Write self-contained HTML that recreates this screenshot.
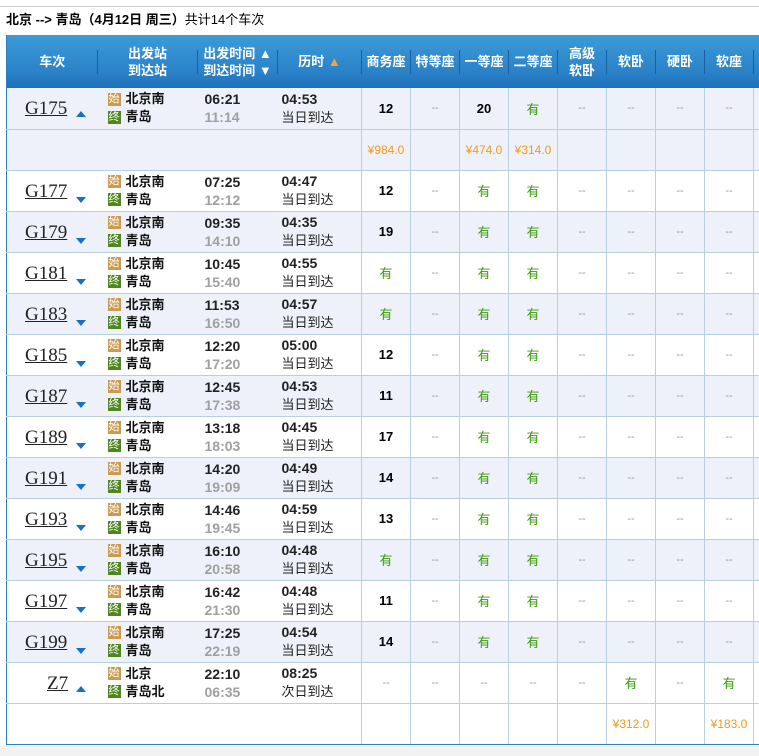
<!DOCTYPE html>
<html><head><meta charset="utf-8"><style>
*{margin:0;padding:0;box-sizing:border-box}
body{width:759px;height:756px;background:#fff;font-family:"Liberation Sans","Noto Sans CJK SC",sans-serif;position:relative;overflow:hidden}
.topline{position:absolute;left:0;top:6px;width:759px;height:1px;background:#d0d0d0}
.title{position:absolute;left:6px;top:9px;font-size:13px;color:#000;white-space:nowrap}
.title b{font-weight:bold}
.bot{position:absolute;left:0;top:746px;width:759px;height:10px;background:#f2f2f2}
table{position:absolute;left:6px;top:35px;border-collapse:collapse;table-layout:fixed;width:800px;border-left:1px solid #2b7fc4}
th{height:53px;color:#fff;font-size:13px;font-weight:bold;background:linear-gradient(#3d9bd9,#2a82c8 70%,#1f70b8);line-height:17px;position:relative;padding:0}
th:after{content:"";position:absolute;right:0;top:15px;height:24px;width:1px;background:#1a5f9e;box-shadow:1px 0 0 #5aaee3}
th:last-child:after{display:none}
td{height:41px;border-bottom:1px solid #b8d0de;padding:0;font-size:13px;text-align:center;vertical-align:middle}
td.s{border-left:1px solid #b8d0de}
tr.b td{background:#eef1f9}
tr.last td{border-bottom:1px solid #2b7fc4}
.tn{position:relative;height:40px}
.tn a{position:absolute;left:18px;top:10px;font-family:"Liberation Serif",serif;font-size:19px;color:#222;text-decoration:underline}
.tn i{position:absolute;left:69px;top:23px;width:0;height:0;border-left:5px solid transparent;border-right:5px solid transparent}
.up{border-bottom:6px solid #1a6fc2}
.dn{border-top:6px solid #1a6fc2;top:26px!important}
.st{text-align:left;font-weight:bold;font-size:13px;color:#111;padding-left:10px}
.st div{height:18px;line-height:18px;display:flex;align-items:center}
.bd{display:inline-block;width:13px;height:13px;color:#fff;font-size:11px;line-height:13px;text-align:center;margin-right:5px;font-weight:normal;flex:none}
.s1{background:#c99a4f}.s2{background:#4f8620}
.tm{text-align:left;line-height:18px;font-weight:bold;font-size:14px;color:#222;padding-left:7px}
.tm span{color:#a0a0a0}
.du{text-align:left;line-height:18px;font-size:13px;color:#222;padding-left:4px}
.du b{font-size:14px}
.n{font-weight:bold}
.y{color:#3a9a0a}
.d{color:#999;font-size:11px}
.p{color:#f09a1d;font-size:12px}
</style></head><body>
<div class="topline"></div>
<div class="title"><b>北京 --&gt; 青岛（4月12日&nbsp;周三）</b>共计14个车次</div>
<div class="bot"></div>
<table>
<colgroup><col style="width:91px"><col style="width:100px"><col style="width:80px"><col style="width:84px"><col style="width:49px"><col style="width:49px"><col style="width:49px"><col style="width:49px"><col style="width:49px"><col style="width:49px"><col style="width:49px"><col style="width:49px"><col style="width:53px"></colgroup>
<tr><th>车次</th><th>出发站<br>到达站</th><th>出发时间 ▲<br>到达时间 ▼</th><th>历时 <span style="color:#f6a23a">▲</span></th><th>商务座</th><th>特等座</th><th>一等座</th><th>二等座</th><th>高级<br>软卧</th><th>软卧</th><th>硬卧</th><th>软座</th><th>硬座</th></tr>
<tr class="b"><td><div class="tn"><a>G175</a><i class="up"></i></div></td><td class="st"><div><span class="bd s1">始</span>北京南</div><div><span class="bd s2">终</span>青岛</div></td><td class="tm">06:21<br><span>11:14</span></td><td class="du"><b>04:53</b><br>当日到达</td><td class="s n">12</td><td class="s d">--</td><td class="s n">20</td><td class="s y">有</td><td class="s d">--</td><td class="s d">--</td><td class="s d">--</td><td class="s d">--</td><td class="s d">--</td></tr>
<tr class="b"><td></td><td></td><td></td><td></td><td class="s p">¥984.0</td><td class="s"></td><td class="s p">¥474.0</td><td class="s p">¥314.0</td><td class="s"></td><td class="s"></td><td class="s"></td><td class="s"></td><td class="s"></td></tr>
<tr><td><div class="tn"><a>G177</a><i class="dn"></i></div></td><td class="st"><div><span class="bd s1">始</span>北京南</div><div><span class="bd s2">终</span>青岛</div></td><td class="tm">07:25<br><span>12:12</span></td><td class="du"><b>04:47</b><br>当日到达</td><td class="s n">12</td><td class="s d">--</td><td class="s y">有</td><td class="s y">有</td><td class="s d">--</td><td class="s d">--</td><td class="s d">--</td><td class="s d">--</td><td class="s d">--</td></tr>
<tr class="b"><td><div class="tn"><a>G179</a><i class="dn"></i></div></td><td class="st"><div><span class="bd s1">始</span>北京南</div><div><span class="bd s2">终</span>青岛</div></td><td class="tm">09:35<br><span>14:10</span></td><td class="du"><b>04:35</b><br>当日到达</td><td class="s n">19</td><td class="s d">--</td><td class="s y">有</td><td class="s y">有</td><td class="s d">--</td><td class="s d">--</td><td class="s d">--</td><td class="s d">--</td><td class="s d">--</td></tr>
<tr><td><div class="tn"><a>G181</a><i class="dn"></i></div></td><td class="st"><div><span class="bd s1">始</span>北京南</div><div><span class="bd s2">终</span>青岛</div></td><td class="tm">10:45<br><span>15:40</span></td><td class="du"><b>04:55</b><br>当日到达</td><td class="s y">有</td><td class="s d">--</td><td class="s y">有</td><td class="s y">有</td><td class="s d">--</td><td class="s d">--</td><td class="s d">--</td><td class="s d">--</td><td class="s d">--</td></tr>
<tr class="b"><td><div class="tn"><a>G183</a><i class="dn"></i></div></td><td class="st"><div><span class="bd s1">始</span>北京南</div><div><span class="bd s2">终</span>青岛</div></td><td class="tm">11:53<br><span>16:50</span></td><td class="du"><b>04:57</b><br>当日到达</td><td class="s y">有</td><td class="s d">--</td><td class="s y">有</td><td class="s y">有</td><td class="s d">--</td><td class="s d">--</td><td class="s d">--</td><td class="s d">--</td><td class="s d">--</td></tr>
<tr><td><div class="tn"><a>G185</a><i class="dn"></i></div></td><td class="st"><div><span class="bd s1">始</span>北京南</div><div><span class="bd s2">终</span>青岛</div></td><td class="tm">12:20<br><span>17:20</span></td><td class="du"><b>05:00</b><br>当日到达</td><td class="s n">12</td><td class="s d">--</td><td class="s y">有</td><td class="s y">有</td><td class="s d">--</td><td class="s d">--</td><td class="s d">--</td><td class="s d">--</td><td class="s d">--</td></tr>
<tr class="b"><td><div class="tn"><a>G187</a><i class="dn"></i></div></td><td class="st"><div><span class="bd s1">始</span>北京南</div><div><span class="bd s2">终</span>青岛</div></td><td class="tm">12:45<br><span>17:38</span></td><td class="du"><b>04:53</b><br>当日到达</td><td class="s n">11</td><td class="s d">--</td><td class="s y">有</td><td class="s y">有</td><td class="s d">--</td><td class="s d">--</td><td class="s d">--</td><td class="s d">--</td><td class="s d">--</td></tr>
<tr><td><div class="tn"><a>G189</a><i class="dn"></i></div></td><td class="st"><div><span class="bd s1">始</span>北京南</div><div><span class="bd s2">终</span>青岛</div></td><td class="tm">13:18<br><span>18:03</span></td><td class="du"><b>04:45</b><br>当日到达</td><td class="s n">17</td><td class="s d">--</td><td class="s y">有</td><td class="s y">有</td><td class="s d">--</td><td class="s d">--</td><td class="s d">--</td><td class="s d">--</td><td class="s d">--</td></tr>
<tr class="b"><td><div class="tn"><a>G191</a><i class="dn"></i></div></td><td class="st"><div><span class="bd s1">始</span>北京南</div><div><span class="bd s2">终</span>青岛</div></td><td class="tm">14:20<br><span>19:09</span></td><td class="du"><b>04:49</b><br>当日到达</td><td class="s n">14</td><td class="s d">--</td><td class="s y">有</td><td class="s y">有</td><td class="s d">--</td><td class="s d">--</td><td class="s d">--</td><td class="s d">--</td><td class="s d">--</td></tr>
<tr><td><div class="tn"><a>G193</a><i class="dn"></i></div></td><td class="st"><div><span class="bd s1">始</span>北京南</div><div><span class="bd s2">终</span>青岛</div></td><td class="tm">14:46<br><span>19:45</span></td><td class="du"><b>04:59</b><br>当日到达</td><td class="s n">13</td><td class="s d">--</td><td class="s y">有</td><td class="s y">有</td><td class="s d">--</td><td class="s d">--</td><td class="s d">--</td><td class="s d">--</td><td class="s d">--</td></tr>
<tr class="b"><td><div class="tn"><a>G195</a><i class="dn"></i></div></td><td class="st"><div><span class="bd s1">始</span>北京南</div><div><span class="bd s2">终</span>青岛</div></td><td class="tm">16:10<br><span>20:58</span></td><td class="du"><b>04:48</b><br>当日到达</td><td class="s y">有</td><td class="s d">--</td><td class="s y">有</td><td class="s y">有</td><td class="s d">--</td><td class="s d">--</td><td class="s d">--</td><td class="s d">--</td><td class="s d">--</td></tr>
<tr><td><div class="tn"><a>G197</a><i class="dn"></i></div></td><td class="st"><div><span class="bd s1">始</span>北京南</div><div><span class="bd s2">终</span>青岛</div></td><td class="tm">16:42<br><span>21:30</span></td><td class="du"><b>04:48</b><br>当日到达</td><td class="s n">11</td><td class="s d">--</td><td class="s y">有</td><td class="s y">有</td><td class="s d">--</td><td class="s d">--</td><td class="s d">--</td><td class="s d">--</td><td class="s d">--</td></tr>
<tr class="b"><td><div class="tn"><a>G199</a><i class="dn"></i></div></td><td class="st"><div><span class="bd s1">始</span>北京南</div><div><span class="bd s2">终</span>青岛</div></td><td class="tm">17:25<br><span>22:19</span></td><td class="du"><b>04:54</b><br>当日到达</td><td class="s n">14</td><td class="s d">--</td><td class="s y">有</td><td class="s y">有</td><td class="s d">--</td><td class="s d">--</td><td class="s d">--</td><td class="s d">--</td><td class="s d">--</td></tr>
<tr><td><div class="tn"><a style="left:40px">Z7</a><i class="up"></i></div></td><td class="st"><div><span class="bd s1">始</span>北京</div><div><span class="bd s2">终</span>青岛北</div></td><td class="tm">22:10<br><span>06:35</span></td><td class="du"><b>08:25</b><br>次日到达</td><td class="s d">--</td><td class="s d">--</td><td class="s d">--</td><td class="s d">--</td><td class="s d">--</td><td class="s y">有</td><td class="s d">--</td><td class="s y">有</td><td class="s d">--</td></tr>
<tr class="last"><td></td><td></td><td></td><td></td><td class="s"></td><td class="s"></td><td class="s"></td><td class="s"></td><td class="s"></td><td class="s p">¥312.0</td><td class="s"></td><td class="s p">¥183.0</td><td class="s"></td></tr>
</table>
</body></html>
